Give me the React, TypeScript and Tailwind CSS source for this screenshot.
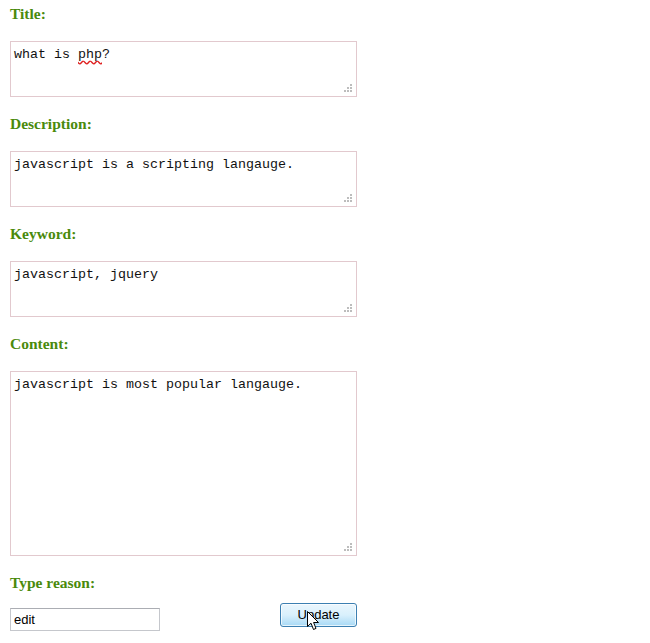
import React from 'react';

const label = "block text-[15.5px] leading-[16px] font-bold text-[#4a8a0c] [font-family:'Liberation_Serif',serif]";
const box =
  "relative w-[347px] border border-[#e2c9ce] bg-white px-[3px] py-[5px] text-[13.33px] leading-[15px] text-[#111] [font-family:'Liberation_Mono',monospace] whitespace-pre-wrap";

function Grip() {
  return (
    <svg className="absolute right-[3px] bottom-[3px]" width="10" height="10" viewBox="0 0 10 10">
      {[
        [7, 1],
        [4, 4],
        [7, 4],
        [1, 7],
        [4, 7],
        [7, 7],
      ].map(([x, y], i) => (
        <rect key={i} x={x} y={y} width="2" height="2" fill="#bdbdbd" />
      ))}
    </svg>
  );
}

function Field({ name, h, children }: { name: string; h: string; children: React.ReactNode }) {
  return (
    <div className="flex flex-col mb-[19px]">
      <span className={label}>{name}</span>
      <div className={`${box} ${h} mt-[19px]`}>
        {children}
        <Grip />
      </div>
    </div>
  );
}

function Cursor() {
  return (
    <svg className="absolute left-[26px] top-[7px]" width="13" height="20" viewBox="0 0 13 20">
      <path
        d="M0.5 0.5 L0.5 15.5 L4 12.2 L6.5 18.5 L9 17.4 L6.6 11.5 L11.5 11.5 Z"
        fill="#fff"
        stroke="#000"
        strokeWidth="1"
        strokeLinejoin="miter"
      />
    </svg>
  );
}

export default function App() {
  return (
    <div className="bg-white min-h-[643px] pl-[10px] pt-[6px]">
      <Field name="Title:" h="h-[56px]">
        what is{' '}
        <span className="underline decoration-wavy decoration-[#e02020] underline-offset-[2px]">php</span>?
      </Field>
      <Field name="Description:" h="h-[56px]">
        javascript is a scripting langauge.
      </Field>
      <Field name="Keyword:" h="h-[56px]">
        javascript, jquery
      </Field>
      <Field name="Content:" h="h-[185px]">
        javascript is most popular langauge.
      </Field>
      <span className={label}>Type reason:</span>
      <div className="flex w-[347px] justify-between items-start mt-[12px]">
        <input
          defaultValue="edit"
          className="mt-[5px] w-[150px] h-[23px] border border-[#c5c7cc] border-t-[#abadb3] px-[3px] text-[13px] text-black outline-none [font-family:'Liberation_Sans',Arial,sans-serif]"
        />
        <button className="relative w-[77px] h-[24px] rounded-[3px] border border-[#3c7fb1] bg-gradient-to-b from-[#eaf6fd] via-[#d9f0fc] to-[#a7d9f5] text-[13px] text-black [font-family:'Liberation_Sans',Arial,sans-serif] shadow-[inset_0_0_0_1px_rgba(255,255,255,0.7)]">
          Update
          <Cursor />
        </button>
      </div>
    </div>
  );
}
